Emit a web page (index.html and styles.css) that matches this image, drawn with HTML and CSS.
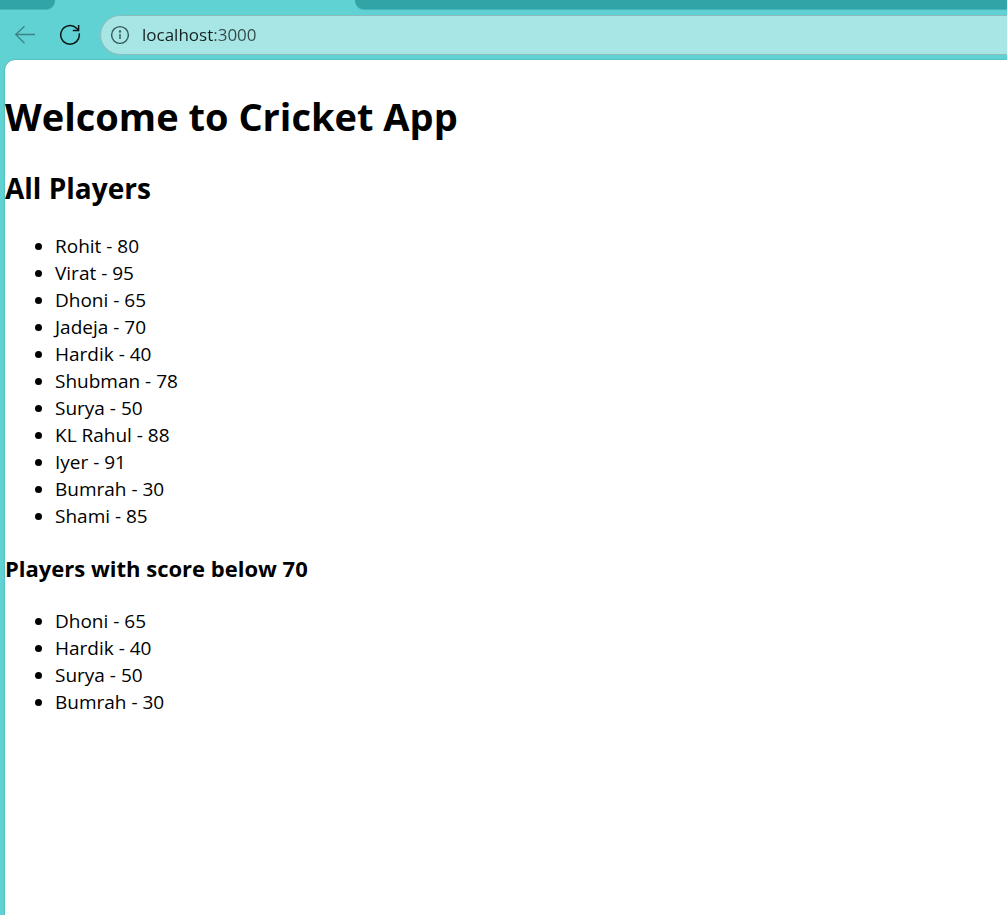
FILE: index.html
```html
<!DOCTYPE html>
<html lang="en">
<head>
<meta charset="utf-8">
<meta name="viewport" content="width=device-width, initial-scale=1">
<title>Cricket App</title>
<link rel="stylesheet" href="styles.css">
</head>
<body>
<div class="browser">
  <div class="tabs">
    <div class="tab tab-before"></div>
    <div class="tab-active"></div>
    <div class="tab tab-after"></div>
  </div>
  <div class="toolbar">
    <button class="tool back" type="button" aria-label="Back">
      <svg width="22" height="20" viewBox="0 0 22 20" fill="none" stroke="#3f8184" stroke-width="1.3"><path d="M10.5 1.2 1.7 9.5l8.8 8.8M1.7 9.5H21"/></svg>
    </button>
    <button class="tool reload" type="button" aria-label="Reload">
      <svg width="22" height="22" viewBox="0 0 22 22" fill="none" stroke="#0b1718" stroke-width="1.5"><path d="M20.2 9.3A9.3 9.3 0 1 1 17.6 4.3L19.6 6.2M19.6 1v5.6H13.8"/></svg>
    </button>
    <div class="address">
      <button class="info" type="button" aria-label="Site information">
        <svg width="20" height="20" viewBox="0 0 20 20" fill="none" stroke="#355557" stroke-width="1.4"><circle cx="10" cy="10" r="8.4"/><path d="M10 9v5"/><circle cx="10" cy="6.5" r=".5" fill="#355557"/></svg>
      </button>
      <input class="url" type="text" value="localhost:3000" aria-label="Address" spellcheck="false">
    </div>
  </div>
  <main class="page">
    <h1>Welcome to Cricket App</h1>
    <h2>All Players</h2>
    <ul>
      <li>Rohit - 80</li>
      <li>Virat - 95</li>
      <li>Dhoni - 65</li>
      <li>Jadeja - 70</li>
      <li>Hardik - 40</li>
      <li>Shubman - 78</li>
      <li>Surya - 50</li>
      <li>KL Rahul - 88</li>
      <li>Iyer - 91</li>
      <li>Bumrah - 30</li>
      <li>Shami - 85</li>
    </ul>
    <h3>Players with score below 70</h3>
    <ul>
      <li>Dhoni - 65</li>
      <li>Hardik - 40</li>
      <li>Surya - 50</li>
      <li>Bumrah - 30</li>
    </ul>
  </main>
</div>
</body>
</html>
```

FILE: styles.css
```css
* {
  box-sizing: border-box;
}

body {
  margin: 0;
  font-family: "Segoe UI", "Open Sans", "Noto Sans", sans-serif;
  color: #000;
}

.browser {
  display: flex;
  flex-direction: column;
  min-height: 100vh;
  background: #61d2d3;
}

.tabs {
  display: flex;
  height: 10px;
}

.tab {
  background: #30a4a7;
  border-bottom: 1px solid #46b5b8;
}

.tab-before {
  width: 55px;
  border-bottom-right-radius: 9px;
}

.tab-active {
  width: 300px;
}

.tab-after {
  flex: 1;
  border-bottom-left-radius: 9px;
}

.toolbar {
  display: flex;
  align-items: center;
  padding: 5px 0 5px 14px;
}

.tool,
.info {
  display: flex;
  padding: 0;
  border: 0;
  background: none;
}

.reload {
  margin: 0 19px 0 23px;
}

.address {
  display: flex;
  flex: 1;
  align-items: center;
  gap: 12px;
  height: 40px;
  padding-left: 9px;
  border: 1px solid #8bbcbc;
  border-width: 1px 0 1px 1px;
  border-radius: 20px 0 0 20px;
  background: #a7e6e4;
}

.url {
  flex: 1;
  min-width: 0;
  padding: 0;
  border: 0;
  outline: 0;
  background: linear-gradient(90deg, #142020 72px, #344a49 72px) text;
  color: transparent;
  font: 17px/24px "Segoe UI", "Open Sans", "Noto Sans", sans-serif;
}

.page {
  flex: 1;
  margin-left: 5px;
  border-top-left-radius: 10px;
  background: #fff;
  box-shadow: 0 0 2px #3d9b9d;
}

h1,
h2,
h3 {
  font-weight: 700;
}

h1 {
  margin: 29px 0 25px;
  font-size: 38px;
  line-height: 54px;
}

h2 {
  margin: 0 0 25px;
  font-size: 28px;
  line-height: 40px;
}

h3 {
  margin: 23px 0 25px;
  font-size: 22px;
  line-height: 30px;
}

ul {
  margin: 0;
  padding-left: 50px;
  font-size: 19px;
  line-height: 27px;
}
```
